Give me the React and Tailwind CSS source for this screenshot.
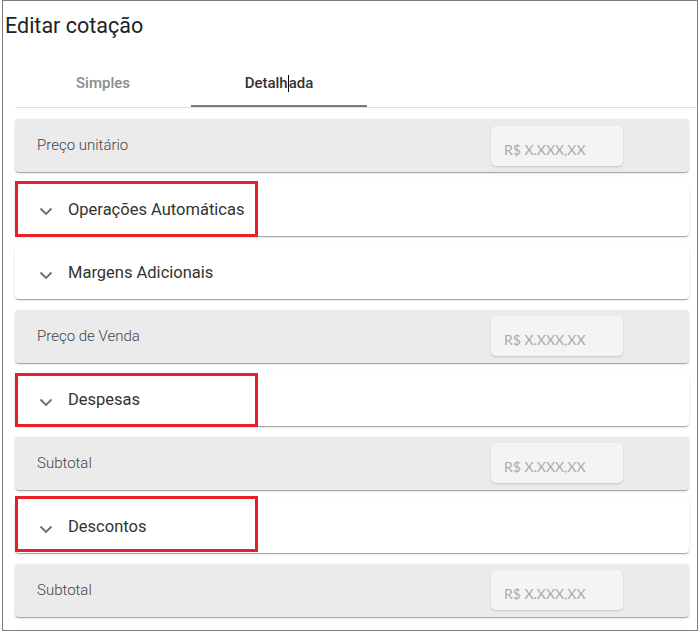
import { useState } from 'react';

const ROWS = [
    { kind: 'field', label: 'Preço unitário' },
    { kind: 'section', label: 'Operações Automáticas', marked: 'top-[-2px] h-[56px]' },
    { kind: 'section', label: 'Margens Adicionais' },
    { kind: 'field', label: 'Preço de Venda' },
    { kind: 'section', label: 'Despesas', marked: 'top-[0px] h-[54px]' },
    { kind: 'field', label: 'Subtotal' },
    { kind: 'section', label: 'Descontos', marked: 'top-[-4px] h-[56px]' },
    { kind: 'field', label: 'Subtotal' },
    { kind: 'section', label: '' },
];

function Chevron() {
    return (
        <svg width="14" height="9" viewBox="0 0 14 9" className="mt-[5px] shrink-0">
            <path d="M1.5 1.5 L7 7 L12.5 1.5" fill="none" stroke="#6b6b6b" strokeWidth="1.8" />
        </svg>
    );
}

function FieldRow({ label }) {
    return (
        <div className="h-[53px] shrink-0 rounded-[4px] bg-[#ebebeb] shadow-[0_2px_1px_-1px_rgba(0,0,0,0.2),0_1px_1px_0_rgba(0,0,0,0.14),0_1px_3px_0_rgba(0,0,0,0.12)] flex items-center justify-between pl-[22px] pr-[66px]">
            <span className="text-[15px] font-light text-[#444]">{label}</span>
            <div className="w-[132px] h-[40px] rounded-[5px] bg-[#f4f4f4] shadow-[0_1px_2px_rgba(0,0,0,0.16)] flex items-end pl-[13px] pb-[7px]">
                <span className="font-['Lato',sans-serif] text-[14px] leading-[18px] text-[#a9a9a9]">R$ X.XXX,XX</span>
            </div>
        </div>
    );
}

function SectionRow({ label, marked }) {
    const [open, setOpen] = useState(false);
    return (
        <div
            onClick={() => setOpen(!open)}
            className="relative h-[53px] shrink-0 rounded-[4px] bg-white shadow-[0_2px_1px_-1px_rgba(0,0,0,0.2),0_1px_1px_0_rgba(0,0,0,0.14),0_1px_3px_0_rgba(0,0,0,0.12)] flex items-center pl-[24px] gap-[15px] cursor-pointer"
        >
            {label && <Chevron />}
            <span className="text-[16.5px] text-[#333] mt-[2px]">{label}</span>
            {marked && (
                <div className={`absolute left-0 w-[243px] border-[3px] border-[#e8202a] ${marked}`} />
            )}
        </div>
    );
}

export default function App() {
    const [tab, setTab] = useState('detalhada');

    return (
        <div className="font-['Roboto',sans-serif] bg-white w-[700px] h-[632px]">
            <div className="ml-[2px] w-[696px] h-[631px] border border-[#7d7d7d] overflow-hidden flex flex-col">
                <h1 className="pt-[11px] pl-[2px] text-[21.5px] leading-[28px] text-[#222]">Editar cotação</h1>

                <div className="mt-[19px] ml-[12px] h-[49px] border-b border-[#e0e0e0] flex shrink-0">
                    <button
                        onClick={() => setTab('simples')}
                        className={`relative w-[176px] text-[15px] font-medium ${tab === 'simples' ? 'text-[#333]' : 'text-[#8c8c8c]'}`}
                    >
                        Simples
                        {tab === 'simples' && <span className="absolute left-0 right-0 bottom-0 h-[2px] bg-[#7a7a7a]" />}
                    </button>
                    <button
                        onClick={() => setTab('detalhada')}
                        className={`relative w-[176px] text-[15px] font-medium ${tab === 'detalhada' ? 'text-[#333]' : 'text-[#8c8c8c]'}`}
                    >
                        Detalh<span className="inline-block w-0 h-[17px] border-l border-black align-middle" />ada
                        {tab === 'detalhada' && <span className="absolute left-0 right-0 bottom-0 h-[2px] bg-[#7a7a7a]" />}
                    </button>
                </div>

                <div className="mt-[11px] ml-[12px] mr-[8px] flex flex-col gap-[10.5px]">
                    {ROWS.map((row, i) =>
                        row.kind === 'field'
                            ? <FieldRow key={i} label={row.label} />
                            : <SectionRow key={i} label={row.label} marked={row.marked} />
                    )}
                </div>
            </div>
        </div>
    );
}
